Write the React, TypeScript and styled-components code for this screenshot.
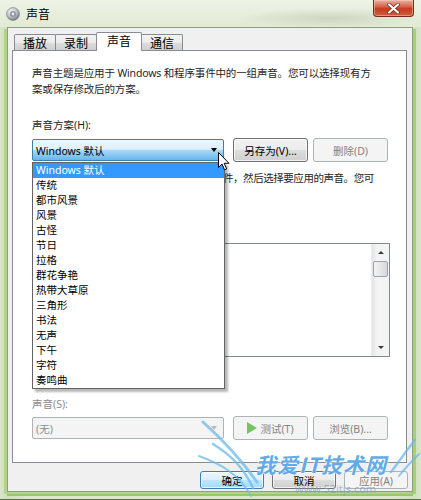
import React from "react";
import styled, { createGlobalStyle } from "styled-components";

const GlobalStyle = createGlobalStyle`
  html, body {
    margin: 0;
    padding: 0;
    background: #fff;
  }
  body {
    font-family: "Noto Sans", "Noto Sans CJK SC", sans-serif;
    font-size: 10.5px;
    color: #1e1e1e;
  }
`;

const Window = styled.div`
  position: relative;
  width: 421px;
  height: 500px;
  box-sizing: border-box;
  display: flex;
  flex-direction: column;
  overflow: hidden;
  background: linear-gradient(90deg, #d9e5cc 0%, #cfe0bb 2%, #dbe6cd 6%, #dbe6cd 94%, #cfe0bb 98%, #d9e5cc 100%);
  border-bottom: 1px solid #55713f;
`;

const TitleBar = styled.div`
  height: 27px;
  flex: none;
  display: flex;
  align-items: center;
  padding: 0 7px 0 6px;
  background: radial-gradient(ellipse 90px 10px at 330px 18px, rgba(150, 160, 140, 0.3), transparent),
    linear-gradient(180deg, #eef3e6 0%, #e1ead3 100%);
`;

const Title = styled.span`
  margin-left: 6px;
  font-size: 12px;
  color: #000;
`;

const CloseButton = styled.div`
  margin-left: auto;
  align-self: flex-start;
  width: 41px;
  height: 17px;
  box-sizing: border-box;
  display: flex;
  align-items: center;
  justify-content: center;
  border: 1px solid #7a2a1c;
  border-top: none;
  border-radius: 0 0 4px 4px;
  background: linear-gradient(180deg, #eab3a4 0%, #d9664c 40%, #c43b1f 55%, #d0603d 100%);
  box-shadow: inset 0 0 0 1px rgba(255, 210, 190, 0.45);
`;

const Client = styled.div`
  flex: 1;
  display: flex;
  flex-direction: column;
  margin: 0 8px 7px 7px;
  padding: 0 5px 0 4px;
  background: #f0f0f0;
  border: 1px solid #8e9d86;
  box-shadow: -3px 2px 0 0 #b2d38b, 3px 2px 0 0 #a6cf78, 0 4px 0 0 #98c865;
`;

const TabStrip = styled.div`
  height: 22px;
  flex: none;
  display: flex;
  align-items: flex-end;
  padding-left: 3px;
`;

const Tab = styled.div<{ $active?: boolean }>`
  position: relative;
  z-index: ${(p) => (p.$active ? 2 : 1)};
  box-sizing: border-box;
  height: ${(p) => (p.$active ? 19 : 16)}px;
  margin-left: -1px;
  margin-bottom: ${(p) => (p.$active ? -1 : 0)}px;
  padding: 0 ${(p) => (p.$active ? 10 : 8)}px ${(p) => (p.$active ? 2 : 0)}px;
  display: flex;
  align-items: center;
  font-size: 12px;
  color: #000;
  border: 1px solid #898c95;
  border-bottom: none;
  border-radius: 2px 2px 0 0;
  background: ${(p) => (p.$active ? "#fff" : "linear-gradient(180deg, #f3f3f3 0%, #ebebeb 50%, #dddddd 51%, #cfcfcf 100%)")};
`;

const Panel = styled.div`
  box-sizing: border-box;
  height: 413px;
  flex: none;
  display: flex;
  flex-direction: column;
  padding: 14px 16px 0 19px;
  background: #fff;
  border: 1px solid #898c95;
`;

const Para = styled.div`
  line-height: 16px;
  letter-spacing: -0.15px;
  white-space: nowrap;
`;

/* only the tail of this line shows from under the open drop-down */
const HintLine = styled.div`
  margin: 8px 0 0 191px;
  height: 32px;
  line-height: 16px;
  letter-spacing: -0.45px;
  white-space: nowrap;
`;

const Label = styled.div<{ $gap: number; $disabled?: boolean }>`
  margin-top: ${(p) => p.$gap}px;
  height: 16px;
  line-height: 16px;
  color: ${(p) => (p.$disabled ? "#8d8d8d" : "#1e1e1e")};
`;

const FieldRow = styled.div<{ $gap: number }>`
  margin-top: ${(p) => p.$gap}px;
  height: 24px;
  display: flex;
  align-items: center;
  gap: 9px;
`;

const ButtonGroup = styled.div`
  display: flex;
  gap: 5px;
`;

const ComboWrap = styled.div`
  position: relative;
  width: 192px;
  height: 22px;
`;

const Combo = styled.div<{ $open?: boolean; $disabled?: boolean }>`
  box-sizing: border-box;
  height: 22px;
  display: flex;
  align-items: center;
  padding: 0 6px 0 3px;
  border: 1px solid ${(p) => (p.$open ? "#3c7fb1" : "#adb2b5")};
  border-radius: 2px;
  color: ${(p) => (p.$disabled ? "#8d8d8d" : "#000")};
  background: ${(p) =>
    p.$open
      ? "linear-gradient(180deg, #eef7fd 0%, #dcf0fb 46%, #a9d8f6 52%, #66b8ec 100%)"
      : "#f4f4f4"};
`;

const ComboText = styled.span`
  flex: 1;
`;

const ComboArrow = styled.span<{ $disabled?: boolean }>`
  width: 0;
  height: 0;
  border-left: 3.5px solid transparent;
  border-right: 3.5px solid transparent;
  border-top: 4px solid ${(p) => (p.$disabled ? "#b8b8b8" : "#000")};
`;

const DropList = styled.div`
  position: absolute;
  z-index: 5;
  top: 23px;
  left: 0;
  width: 193px;
  box-sizing: border-box;
  background: #fff;
  border: 1px solid #646464;
  box-shadow: 3px 3px 2px rgba(0, 0, 0, 0.28);
`;

const DropItem = styled.div<{ $selected?: boolean }>`
  height: 15px;
  line-height: 15px;
  padding-left: 3px;
  color: ${(p) => (p.$selected ? "#fff" : "#000")};
  background: ${(p) => (p.$selected ? "#3399ff" : "transparent")};
`;

const Button = styled.div<{ $disabled?: boolean; $default?: boolean; $w?: number; $h?: number }>`
  box-sizing: border-box;
  width: ${(p) => p.$w ?? 75}px;
  height: ${(p) => p.$h ?? 24}px;
  display: flex;
  align-items: center;
  justify-content: center;
  gap: 3px;
  border-radius: 3px;
  border: 1px solid ${(p) => (p.$default ? "#3c7fb1" : p.$disabled ? "#adb2b5" : "#707070")};
  color: ${(p) => (p.$disabled ? "#838383" : "#000")};
  background: ${(p) =>
    p.$default
      ? "linear-gradient(180deg, #eaf6fd 0%, #d9f0fc 50%, #bee6fd 51%, #a7d9f5 100%)"
      : p.$disabled
      ? "#f4f4f4"
      : "linear-gradient(180deg, #f2f2f2 0%, #ebebeb 50%, #dddddd 51%, #cfcfcf 100%)"};
  box-shadow: ${(p) => (p.$disabled ? "none" : "inset 0 0 0 1px rgba(255, 255, 255, 0.7)")};
`;

const PlayIcon = styled.span`
  width: 0;
  height: 0;
  border-top: 6px solid transparent;
  border-bottom: 6px solid transparent;
  border-left: 10px solid #74c462;
`;

const ListBox = styled.div`
  margin-top: 5px;
  height: 114px;
  box-sizing: border-box;
  display: flex;
  border: 1px solid #828790;
  background: #fff;
`;

const ListBody = styled.div`
  flex: 1;
`;

const ScrollTrack = styled.div`
  width: 17px;
  display: flex;
  flex-direction: column;
  background: linear-gradient(90deg, #e4e4e4 0%, #f4f4f4 30%, #f4f4f4 100%);
  border-left: 1px solid #ececec;
`;

const ScrollArrow = styled.div<{ $down?: boolean }>`
  height: 17px;
  display: flex;
  align-items: center;
  justify-content: center;
  &::after {
    content: "";
    border-left: 3px solid transparent;
    border-right: 3px solid transparent;
    ${(p) => (p.$down ? "border-top: 3px solid #3b3b3b;" : "border-bottom: 3px solid #3b3b3b;")}
  }
`;

const ScrollThumb = styled.div`
  height: 16px;
  margin: 0 1px;
  box-sizing: border-box;
  border: 1px solid #9da3aa;
  border-radius: 2px;
  background: linear-gradient(90deg, #f3f3f3 0%, #e6e6e6 50%, #d7d7d7 100%);
`;

const ScrollSpace = styled.div`
  flex: 1;
`;

/* the start-up sound checkbox row sits entirely under the open list */
const CheckRow = styled.div`
  margin-top: 12px;
  height: 16px;
`;

const Footer = styled.div`
  display: flex;
  justify-content: flex-end;
  gap: 8px;
  margin: 8px -1px 0 0;
`;

const Watermark = styled.div`
  position: absolute;
  z-index: 10;
  left: 195px;
  top: 410px;
  width: 226px;
  height: 90px;
  pointer-events: none;
`;

const WatermarkTitle = styled.div`
  position: absolute;
  left: 60px;
  top: 42px;
  font-family: "Noto Sans CJK SC", sans-serif;
  font-size: 21px;
  line-height: 24px;
  font-weight: 700;
  font-style: italic;
  letter-spacing: 1px;
  color: rgba(70, 155, 225, 0.85);
  text-shadow: 0 0 2px #fff, 0 0 1px #fff;
  white-space: nowrap;
`;

const WatermarkUrl = styled.div`
  position: absolute;
  left: 100px;
  top: 71px;
  font-size: 11px;
  color: rgba(120, 160, 200, 0.7);
  white-space: nowrap;
`;

const Cursor = styled.svg`
  position: absolute;
  z-index: 20;
  left: 218px;
  top: 152px;
`;

const schemes = [
  "Windows 默认",
  "传统",
  "都市风景",
  "风景",
  "古怪",
  "节日",
  "拉格",
  "群花争艳",
  "热带大草原",
  "三角形",
  "书法",
  "无声",
  "下午",
  "字符",
  "奏鸣曲",
];

const tabs = ["播放", "录制", "声音", "通信"];

const SpeakerIcon = () => (
  <svg width="14" height="14" viewBox="0 0 14 14">
    <defs>
      <radialGradient id="spk" cx="40%" cy="35%" r="65%">
        <stop offset="0%" stopColor="#fdfdfd" />
        <stop offset="60%" stopColor="#b9bec4" />
        <stop offset="100%" stopColor="#6f7780" />
      </radialGradient>
    </defs>
    <circle cx="7" cy="7" r="6.5" fill="url(#spk)" stroke="#7d858d" strokeWidth="0.6" />
    <circle cx="7" cy="7" r="3" fill="#8d959d" />
    <circle cx="7" cy="7" r="1.4" fill="#e8eaec" />
  </svg>
);

export default function App() {
  return (
    <>
      <GlobalStyle />
      <Window>
        <TitleBar>
          <SpeakerIcon />
          <Title>声音</Title>
          <CloseButton>
            <svg width="13" height="11" viewBox="0 0 13 11">
              <path d="M2 1.5 L11 9.5 M11 1.5 L2 9.5" stroke="#6a2a20" strokeWidth="3.6" strokeLinecap="round" />
              <path d="M2 1.5 L11 9.5 M11 1.5 L2 9.5" stroke="#fff" strokeWidth="2.2" strokeLinecap="round" />
            </svg>
          </CloseButton>
        </TitleBar>

        <Client>
          <TabStrip>
            {tabs.map((t) => (
              <Tab key={t} $active={t === "声音"}>
                {t}
              </Tab>
            ))}
          </TabStrip>

          <Panel>
            <Para>
              声音主题是应用于 Windows 和程序事件中的一组声音。您可以选择现有方
              <br />
              案或保存修改后的方案。
            </Para>

            <Label $gap={20}>声音方案(H):</Label>
            <FieldRow $gap={5}>
              <ComboWrap>
                <Combo $open>
                  <ComboText>Windows 默认</ComboText>
                  <ComboArrow />
                </Combo>
                <DropList>
                  {schemes.map((s, i) => (
                    <DropItem key={s} $selected={i === 0}>
                      {s}
                    </DropItem>
                  ))}
                </DropList>
              </ComboWrap>
              <ButtonGroup>
                <Button>另存为(V)...</Button>
                <Button $disabled>删除(D)</Button>
              </ButtonGroup>
            </FieldRow>

            <HintLine>件，然后选择要应用的声音。您可</HintLine>

            <Label $gap={20} />
            <ListBox>
              <ListBody />
              <ScrollTrack>
                <ScrollArrow />
                <ScrollThumb />
                <ScrollSpace />
                <ScrollArrow $down />
              </ScrollTrack>
            </ListBox>

            <CheckRow />

            <Label $gap={11} $disabled>
              声音(S):
            </Label>
            <FieldRow $gap={4}>
              <ComboWrap>
                <Combo $disabled>
                  <ComboText>(无)</ComboText>
                  <ComboArrow $disabled />
                </Combo>
              </ComboWrap>
              <ButtonGroup>
                <Button $disabled>
                  <PlayIcon />
                  测试(T)
                </Button>
                <Button $disabled>浏览(B)...</Button>
              </ButtonGroup>
            </FieldRow>
          </Panel>

          <Footer>
            <Button $default $w={64} $h={18}>
              确定
            </Button>
            <Button $w={64} $h={18}>
              取消
            </Button>
            <Button $disabled $w={64} $h={18}>
              应用(A)
            </Button>
          </Footer>
        </Client>

        <Watermark>
          <svg width="226" height="90" viewBox="0 0 226 90">
            <g fill="none" stroke="rgba(110, 185, 235, 0.75)" strokeLinecap="round">
              <path d="M8 12 C 28 30, 45 48, 62 72" strokeWidth="3" />
              <path d="M18 34 C 34 44, 48 56, 58 78" strokeWidth="2.5" />
              <path d="M4 46 C 26 54, 44 64, 56 86" strokeWidth="2" />
              <path d="M220 30 C 210 42, 204 52, 196 62" strokeWidth="2.5" />
              <path d="M224 44 C 216 52, 210 58, 204 66" strokeWidth="2" />
            </g>
          </svg>
          <WatermarkTitle>我爱IT技术网</WatermarkTitle>
          <WatermarkUrl>www.52itjs.com</WatermarkUrl>
        </Watermark>

        <Cursor width="12" height="19" viewBox="0 0 12 19">
          <path d="M0.5 0.5 L0.5 15.5 L4 12 L6.5 17.8 L8.6 16.9 L6.2 11.3 L11 11.3 Z" fill="#fff" stroke="#000" strokeWidth="1" strokeLinejoin="round" />
        </Cursor>
      </Window>
    </>
  );
}
